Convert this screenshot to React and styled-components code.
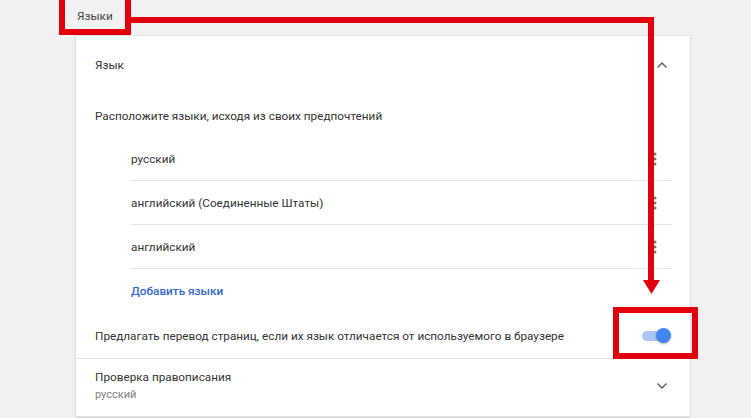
import React from "react";
import styled, { createGlobalStyle } from "styled-components";

const GlobalStyle = createGlobalStyle`
  html, body {
    margin: 0;
    padding: 0;
    background: #f1f1f1;
    font-family: Roboto, "Liberation Sans", Arial, sans-serif;
    color: #333;
  }
`;

const languages = ["русский", "английский (Соединенные Штаты)", "английский"];

const ChevronIcon = ({ up }) => (
  <svg width="12" height="8" viewBox="0 0 12 8">
    <path
      d={up ? "M1.5 6.5 L6 2 L10.5 6.5" : "M1.5 1.5 L6 6 L10.5 1.5"}
      fill="none"
      stroke="#5a5a5a"
      strokeWidth="1.4"
    />
  </svg>
);

const MoreIcon = () => (
  <svg width="4" height="14" viewBox="0 0 4 14">
    <circle cx="2" cy="2" r="1.5" fill="#777" />
    <circle cx="2" cy="7" r="1.5" fill="#777" />
    <circle cx="2" cy="12" r="1.5" fill="#777" />
  </svg>
);

const App = () => {
  return (
    <Page>
      <GlobalStyle />
      <PageTitle>Языки</PageTitle>
      <Card>
        <SectionHeader>
          <span>Язык</span>
          <IconSlot>
            <ChevronIcon up />
          </IconSlot>
        </SectionHeader>
        <Description>Расположите языки, исходя из своих предпочтений</Description>
        <LangList>
          {languages.map(lang => (
            <LangItem key={lang}>
              <span>{lang}</span>
              <MoreSlot>
                <MoreIcon />
              </MoreSlot>
            </LangItem>
          ))}
          <AddLink>Добавить языки</AddLink>
        </LangList>
        <ToggleRow>
          <span>Предлагать перевод страниц, если их язык отличается от используемого в браузере</span>
          <Toggle>
            <Track />
            <Thumb />
          </Toggle>
        </ToggleRow>
        <SpellRow>
          <div>
            <SpellTitle>Проверка правописания</SpellTitle>
            <SpellSub>русский</SpellSub>
          </div>
          <IconSlot>
            <ChevronIcon />
          </IconSlot>
        </SpellRow>
      </Card>
      <Overlay width="751" height="418" viewBox="0 0 751 418">
        <rect x="62" y="-3" width="66" height="35" fill="none" stroke="#e1000c" strokeWidth="6" />
        <path d="M128 20 H651 V283" fill="none" stroke="#e1000c" strokeWidth="6" />
        <path d="M643 280 H660 L651.5 294 Z" fill="#e1000c" />
        <rect x="616" y="310" width="79" height="46" fill="none" stroke="#e1000c" strokeWidth="6" />
      </Overlay>
    </Page>
  );
};

export default App;

const Page = styled.div`
  position: relative;
  width: 751px;
  height: 418px;
  padding-left: 76px;
  box-sizing: border-box;
  overflow: hidden;
  font-size: 11.75px;
`;

const PageTitle = styled.div`
  height: 36px;
  display: flex;
  align-items: center;
  padding-left: 1px;
  padding-bottom: 4px;
  box-sizing: border-box;
  color: #444;
`;

const Card = styled.div`
  width: 614px;
  background: #fff;
  box-shadow: 0 0 0 1px #e2e2e2, 0 2px 3px rgba(0, 0, 0, 0.18);
`;

const SectionHeader = styled.div`
  height: 58px;
  display: flex;
  align-items: center;
  justify-content: space-between;
  padding: 0 22px 0 19px;
`;

const IconSlot = styled.div`
  width: 12px;
  display: flex;
  align-items: center;
  justify-content: center;
`;

const Description = styled.div`
  height: 43px;
  display: flex;
  align-items: center;
  padding-left: 19px;
`;

const LangList = styled.div`
  margin: 0 18px 0 55px;
`;

const LangItem = styled.div`
  height: 44px;
  display: flex;
  align-items: center;
  justify-content: space-between;
  border-bottom: 1px solid #e4e4e4;
  box-sizing: border-box;
`;

const MoreSlot = styled.div`
  display: flex;
  align-items: center;
  padding-right: 15px;
`;

const AddLink = styled.div`
  height: 44px;
  display: flex;
  align-items: center;
  font-weight: 500;
  color: #3367d6;
`;

const ToggleRow = styled.div`
  height: 45px;
  display: flex;
  align-items: center;
  justify-content: space-between;
  padding: 0 18px 0 19px;
  border-bottom: 1px solid #e4e4e4;
`;

const Toggle = styled.div`
  position: relative;
  width: 29px;
  height: 16px;
  margin-right: 1px;
`;

const Track = styled.div`
  position: absolute;
  left: 0;
  top: 3px;
  width: 26px;
  height: 10px;
  border-radius: 5px;
  background: #a9c6f6;
`;

const Thumb = styled.div`
  position: absolute;
  right: 0;
  top: 0;
  width: 15px;
  height: 15px;
  border-radius: 50%;
  background: #4285f4;
  box-shadow: 0 1px 2px rgba(0, 0, 0, 0.3);
`;

const SpellRow = styled.div`
  height: 57px;
  display: flex;
  align-items: center;
  justify-content: space-between;
  padding: 0 22px 4px 19px;
  box-sizing: border-box;
`;

const SpellTitle = styled.div`
  line-height: 18px;
`;

const SpellSub = styled.div`
  font-size: 11px;
  line-height: 18px;
  color: #808080;
`;

const Overlay = styled.svg`
  position: absolute;
  left: 0;
  top: 0;
  pointer-events: none;
`;
